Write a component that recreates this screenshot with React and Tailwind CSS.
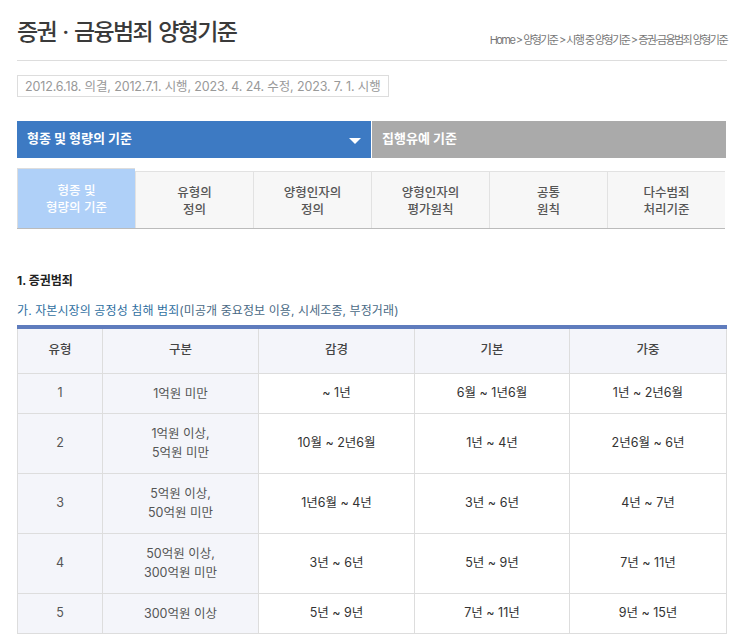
const subTabs = [
  ['형종 및', '형량의 기준'],
  ['유형의', '정의'],
  ['양형인자의', '정의'],
  ['양형인자의', '평가원칙'],
  ['공통', '원칙'],
  ['다수범죄', '처리기준'],
]

const rows = [
  ['1', ['1억원 미만'], '~ 1년', '6월 ~ 1년6월', '1년 ~ 2년6월'],
  ['2', ['1억원 이상,', '5억원 미만'], '10월 ~ 2년6월', '1년 ~ 4년', '2년6월 ~ 6년'],
  ['3', ['5억원 이상,', '50억원 미만'], '1년6월 ~ 4년', '3년 ~ 6년', '4년 ~ 7년'],
  ['4', ['50억원 이상,', '300억원 미만'], '3년 ~ 6년', '5년 ~ 9년', '7년 ~ 11년'],
  ['5', ['300억원 이상'], '5년 ~ 9년', '7년 ~ 11년', '9년 ~ 15년'],
]

const heads = ['유형', '구분', '감경', '기본', '가중']

export default function App() {
  return (
    <div className="w-[736px] h-[642px] overflow-hidden bg-white pl-[17px] pr-[9px] font-['Inter','Noto_Sans_CJK_KR',sans-serif] text-[#333]">
      <div className="flex justify-between h-[61px] border-b border-[#ddd]">
        <h1 className="pt-[16px] text-[23px] leading-[32px] font-medium tracking-[-1.7px] [word-spacing:2px] text-[#3a3a3a]">증권 · 금융범죄 양형기준</h1>
        <p className="pt-[32px] text-[11px] leading-[16px] tracking-[-1.55px] text-[#777]">Home &gt; 양형기준 &gt; 시행 중 양형기준 &gt; 증권·금융범죄 양형기준</p>
      </div>

      <div className="mt-[14px] w-[372px] h-[22px] border border-[#ddd] pl-[7px] text-[12.5px] leading-[21px] tracking-[-0.13px] text-[#999] whitespace-nowrap">
        2012.6.18. 의결, 2012.7.1. 시행, 2023. 4. 24. 수정, 2023. 7. 1. 시행
      </div>

      <div className="mt-[24px] flex gap-px h-[37px] w-[709px]">
        <div className="w-[354px] bg-[#3d7ac3] flex items-center justify-between px-[10px] text-[13px] font-bold text-white">
          <span className="-mt-[2px]">형종 및 형량의 기준</span>
          <span className="w-0 h-0 border-x-[6px] border-x-transparent border-t-[6px] border-t-white mt-[2px]" />
        </div>
        <div className="w-[354px] bg-[#aaa] flex items-center pl-[10px] text-[13px] font-bold text-white">
          <span className="-mt-[2px]">집행유예 기준</span>
        </div>
      </div>

      <div className="mt-[10px] flex items-end h-[61px] w-[708px] border-b border-[#bbb]">
        {subTabs.map((t, i) => (
          <div
            key={t[1]}
            className={i === 0
              ? "w-[118px] h-[60px] bg-[#afd0f8] border-t border-l border-[#ddd] flex flex-col items-center justify-center text-[12.5px] leading-[17px] font-medium text-white"
              : "w-[118px] h-[57px] pt-px bg-[#f7f7f7] border-t border-l border-[#e2e2e2] flex flex-col items-center justify-center text-[12.5px] leading-[17px] font-medium text-[#555]"}
          >
            <span>{t[0]}</span>
            <span>{t[1]}</span>
          </div>
        ))}
      </div>

      <p className="mt-[43px] text-[12px] leading-[18px] font-bold text-[#222]">1. 증권범죄</p>
      <p className="mt-[11px] text-[12px] leading-[20px] tracking-[0.1px] text-[#4a6a85]">
        <span className="text-[#2f6f9f]">가. 자본시장의 공정성 침해 범죄</span>(미공개 중요정보 이용, 시세조종, 부정거래)
      </p>

      <table className="mt-[4px] w-[709px] table-fixed border-collapse border-t-[4px] border-t-[#5f7cbd] text-[12.5px]">
        <colgroup>
          <col className="w-[85px]" />
          <col className="w-[156px]" />
          <col className="w-[156px]" />
          <col className="w-[155px]" />
          <col className="w-[157px]" />
        </colgroup>
        <thead>
          <tr className="h-[46px]">
            {heads.map(h => (
              <th key={h} className="border border-[#ddd] border-t-0 bg-[#f4f5fa] font-medium text-[#444]">{h}</th>
            ))}
          </tr>
        </thead>
        <tbody>
          {rows.map(r => (
            <tr key={r[0]} className={r[1].length > 1 ? 'h-[60px]' : 'h-[40px]'}>
              <td className="border border-[#ddd] bg-[#f4f5fa] text-center text-[#555]">{r[0]}</td>
              <td className="border border-[#ddd] bg-[#f4f5fa] text-center text-[#555] leading-[19px]">
                {r[1].map(l => <div key={l}>{l}</div>)}
              </td>
              <td className="border border-[#ddd] text-center text-[#333]">{r[2]}</td>
              <td className="border border-[#ddd] text-center text-[#333]">{r[3]}</td>
              <td className="border border-[#ddd] text-center text-[#333]">{r[4]}</td>
            </tr>
          ))}
        </tbody>
      </table>
    </div>
  )
}
